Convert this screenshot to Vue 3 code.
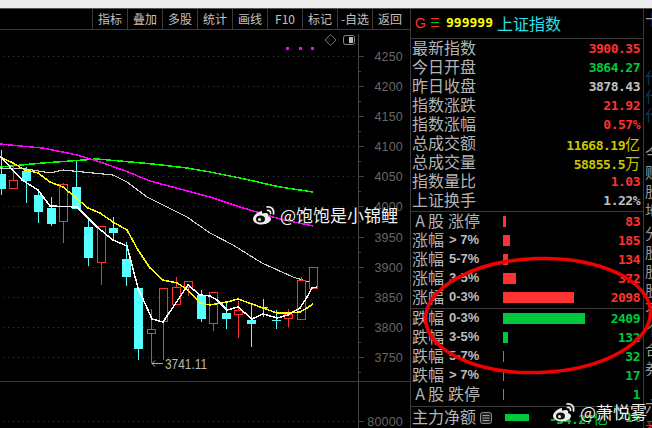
<script setup>
const tools = ['指标', '叠加', '多股', '统计', '画线', 'F10', '标记', '-自选', '返回']

const axis = [
  { y: 56, t: '4250' }, { y: 86, t: '4200' }, { y: 116, t: '4150' }, { y: 146, t: '4100' },
  { y: 176, t: '4050' }, { y: 206, t: '4000' }, { y: 237, t: '3950' }, { y: 267, t: '3900' },
  { y: 297, t: '3850' }, { y: 327, t: '3800' }, { y: 357, t: '3750' }
]

// x, wick top, wick bottom, body top, body bottom, rising
const candles = [
  [1, 150, 195, 174, 189, 0], [13, 163, 189, 180, 188, 1], [26, 167, 203, 171, 181, 0],
  [38, 189, 223, 195, 212, 0], [51, 197, 226, 208, 224, 0], [63, 183, 243, 184, 221, 1],
  [76, 161, 209, 187, 209, 0], [88, 217, 266, 227, 258, 0], [101, 226, 285, 226, 262, 1],
  [113, 217, 240, 228, 233, 0], [126, 242, 286, 259, 277, 0], [138, 288, 360, 288, 349, 0],
  [151, 309, 363, 329, 333, 1], [163, 288, 360, 288, 321, 1], [176, 277, 304, 287, 304, 1],
  [188, 281, 296, 281, 287, 1], [201, 290, 322, 295, 319, 0], [213, 292, 331, 292, 323, 1],
  [226, 302, 329, 313, 319, 0], [238, 301, 338, 310, 314, 1], [251, 303, 347, 320, 324, 0],
  [263, 299, 317, 307, 307.5, 0], [276, 310, 329, 320, 320.5, 0], [288, 309, 327, 314, 318, 1],
  [301, 277, 319, 280, 319, 1], [313, 267, 288, 267, 288, 1]
].map(([x, wt, wb, bt, bb, up]) => ({ x, wt, wb, bt, bb, up }))

const lines = [
  { c: '#00ff00', w: 1.5, p: '0,167 43,163 70,161 97,159 120,161 153,164 187,168 210,172 240,178 280,187 313,192' },
  { c: '#ff00ff', w: 1.5, p: '0,144 20,146 43,148 77,155 97,161 123,170 150,181 180,189 210,197 240,207 280,219 313,226' },
  { c: '#d0d0d0', w: 1.1, p: '0,168 27,169 50,173 63,170 83,172 113,175 127,182 147,197 167,207 187,217 210,233 233,245 262,263 293,277 312,283' },
  { c: '#ffff00', w: 1.5, p: '0,157 13,163 25,170 38,173 50,182 63,187 75,197 88,208 100,213 113,222 127,230 138,250 150,268 163,280 177,283 188,290 200,303 210,305 227,302 238,299 252,304 263,308 277,313 288,313 300,312 307,308 313,304' },
  { c: '#ffffff', w: 1.5, p: '0,156 10,167 22,180 38,190 50,206 77,207 97,227 113,240 127,246 138,288 152,319 163,322 188,285 200,295 210,296 217,300 227,310 238,307 252,319 263,314 277,318 288,315 300,308 307,297 312,288 317,287' }
]

const stats = [
  { l: '最新指数', v: '3900.35', c: 'red' }, { l: '今日开盘', v: '3864.27', c: 'green' },
  { l: '昨日收盘', v: '3878.43', c: 'gray' }, { l: '指数涨跌', v: '21.92', c: 'red' },
  { l: '指数涨幅', v: '0.57%', c: 'red' }, { l: '总成交额', v: '11668.19', u: '亿', c: 'yellow' },
  { l: '总成交量', v: '58855.5', u: '万', c: 'yellow' }, { l: '指数量比', v: '1.03', c: 'red' },
  { l: '上证换手', v: '1.22%', c: 'gray' }
]

const rises = [
  { a: true, l: '涨停', w: 3, v: '83' }, { l: '涨幅', s: '> 7%', w: 7, v: '185' },
  { l: '涨幅', s: '5-7%', w: 5, v: '134' }, { l: '涨幅', s: '3-5%', w: 13, v: '372' },
  { l: '涨幅', s: '0-3%', w: 71, v: '2098' }
]
const falls = [
  { l: '跌幅', s: '0-3%', w: 82, v: '2409' }, { l: '跌幅', s: '3-5%', w: 5, v: '132' },
  { l: '跌幅', s: '5-7%', w: 1, v: '32' }, { l: '跌幅', s: '> 7%', w: 1, v: '17' },
  { a: true, l: '跌停', w: 1, v: '1' }
]

const strip = [
  { t: '十', c: '#999', h: 29 }, { t: '', h: 29 }, { t: '代', c: '#0c3a5c', h: 19 }, { t: '代', c: '#0c3a5c', h: 19 },
  { t: '代', c: '#0c3a5c', h: 19 }, { t: '', h: 19 }, { t: '今', c: '#999', h: 19 }, { t: '财', c: '#999', h: 19 },
  { t: '股', c: '#999', h: 19 }, { t: '地', c: '#999', h: 23 }, { t: '分', c: '#999', h: 19 }, { t: '股', c: '#999', h: 19 },
  { t: '股', c: '#999', h: 19 }, { t: '股', c: '#999', h: 19 }, { t: '不', c: '#999', h: 21 }, { t: '个', c: '#999', h: 19 },
  { t: '合', c: '#999', h: 19 }, { t: '券', c: '#999', h: 19 }, { t: '', h: 19 }, { t: '六', c: '#999', h: 21 },
  { t: '番', c: '#f22', h: 19 }
]
</script>

<template>
  <div class="screen">
    <div class="titlebar"></div>
    <div class="main">
      <div class="left">
        <div class="toolbar">
          <div v-for="t in tools" :key="t" class="tool">{{ t }}</div>
        </div>
        <svg class="chart" width="410" height="398" viewBox="0 30 410 398">
          <g v-for="a in axis" :key="a.t">
            <line x1="3" x2="357" :y1="a.y + 0.5" :y2="a.y + 0.5" class="grid" />
            <line x1="358" x2="364" :y1="a.y + 0.5" :y2="a.y + 0.5" class="tick" />
            <line x1="358" x2="361" :y1="a.y + 15.5" :y2="a.y + 15.5" class="tick" />
            <text x="403" :y="a.y + 5" text-anchor="end" class="axis-label">{{ a.t }}</text>
          </g>
          <line x1="3" x2="357" y1="421.5" y2="421.5" class="grid" />
          <line x1="358" x2="364" y1="421.5" y2="421.5" class="tick" />
          <text x="403" y="426" text-anchor="end" class="axis-label">80000</text>
          <line x1="358.5" x2="358.5" y1="34" y2="428" class="tick" />
          <line x1="0" x2="410" y1="381.5" y2="381.5" stroke="#3a3a3a" />

          <path d="M330.5 34.500l5.500 5.500-5.500 5.500-5.500-5.500z" fill="none" stroke="#777" />
          <rect x="343.5" y="35.5" width="11" height="9" rx="2" fill="#000" stroke="#888" />
          <rect x="349" y="37" width="4" height="6" fill="#bbb" />
          <rect x="286" y="47" width="3" height="3" fill="#ff00ff" />
          <rect x="299" y="47" width="3" height="3" fill="#ff00ff" />
          <rect x="311" y="47" width="3" height="3" fill="#ff00ff" />

          <polyline v-for="l in lines.slice(0, 3)" :key="l.c" :points="l.p" class="ma" :stroke="l.c" :stroke-width="l.w" />
          <g v-for="k in candles" :key="k.x">
            <line :x1="k.x + 0.5" :x2="k.x + 0.5" :y1="k.wt" :y2="k.wb" :stroke="k.up ? '#ff3232' : '#55ffff'" />
            <rect v-if="k.up" :x="k.x - 3.5" :y="k.bt + 0.5" width="8" :height="k.bb - k.bt" fill="#000" stroke="#ff3232" />
            <rect v-else :x="k.x - 4" :y="k.bt" width="9" :height="Math.max(k.bb - k.bt, 1)" fill="#55ffff" />
          </g>
          <polyline v-for="l in lines.slice(3)" :key="l.c" :points="l.p" class="ma" :stroke="l.c" :stroke-width="l.w" />

          <path d="M152 363.500h11M152 363.500l3-3M152 363.500l3 3" fill="none" stroke="#aaa" />
          <text x="165" y="369" textLength="42" lengthAdjust="spacingAndGlyphs" class="low-label">3741.11</text>
        </svg>
      </div>

      <div class="panel">
        <div class="head">
          <span class="g">G</span>
          <svg class="menu" width="8" height="9" viewBox="0 0 8 9">
            <rect y="0" width="8" height="1" fill="#ff3232" />
            <rect y="4" width="8" height="1" fill="#00d040" />
            <rect y="8" width="8" height="1" fill="#ff3232" />
          </svg>
          <span class="code">999999</span>
          <span class="name">上证指数</span>
        </div>

        <div class="section stats">
          <div v-for="s in stats" :key="s.l" class="row">
            <span class="label">{{ s.l }}</span>
            <span class="value" :class="s.c">{{ s.v }}<span v-if="s.u" class="unit">{{ s.u }}</span></span>
          </div>
        </div>

        <div class="section rise">
          <div v-for="r in rises" :key="r.s || r.l" class="row">
            <span class="label wide">
              <template v-if="r.a"><span class="a">A</span>股 <span class="tight">{{ r.l }}</span></template>
              <template v-else>{{ r.l }}<span class="range">{{ r.s }}</span></template>
            </span>
            <span class="bar bar-red" :style="{ width: r.w + 'px' }"></span>
            <span class="value red">{{ r.v }}</span>
          </div>
        </div>

        <div class="section fall">
          <div v-for="r in falls" :key="r.s || r.l" class="row">
            <span class="label wide">
              <template v-if="r.a"><span class="a">A</span>股 <span class="tight">{{ r.l }}</span></template>
              <template v-else>{{ r.l }}<span class="range">{{ r.s }}</span></template>
            </span>
            <span class="bar bar-green" :style="{ width: r.w + 'px' }"></span>
            <span class="value green">{{ r.v }}</span>
          </div>
        </div>

        <div class="section flow">
          <span class="label">主力净额</span>
          <svg class="doc" width="12" height="12" viewBox="0 0 12 12">
            <rect x="0.5" y="0.5" width="11" height="11" rx="2" fill="#222" stroke="#888" />
            <path d="M2.500 3.500h7M2.500 6h7M2.500 8.500h7" stroke="#999" />
          </svg>
          <span class="flow-bar"></span>
          <span class="flow-val">-34.27<span class="unit">亿</span></span>
          <span class="flow-pct">-1%</span>
        </div>
      </div>

      <div class="strip">
        <div v-for="(s, i) in strip" :key="i" class="strip-cell" :style="{ height: s.h + 'px', color: s.c }">{{ s.t }}</div>
      </div>
    </div>

    <svg class="ring" width="652" height="428" viewBox="0 0 652 428">
      <ellipse cx="538" cy="315.5" rx="112.5" ry="57" transform="rotate(-2 538 315.5)" fill="none" stroke="#f00000" stroke-width="3.5" />
    </svg>

    <div class="mark mark-top">
      <svg width="24" height="20" viewBox="0 0 24 20">
        <path d="M9.500 6C5 7 1 11 1 14c0 3.500 4.500 5.500 8.500 5.500 5.500 0 9.500-3 9.500-5.500 0-2-2-2.500-3-3 .8-2-.3-3.500-3-3-1.500.3-3 1-3 .5.300-1.800-.2-2.800-.5-2.500z" fill="#eee" />
        <ellipse cx="8.500" cy="14" rx="4.500" ry="3.500" fill="#111" />
        <circle cx="7.500" cy="14.500" r="1.500" fill="#eee" />
        <path d="M15 2c4-1 7.500 2.500 6.500 7M15.500 5.500c2-.5 3.500 1 3 3" fill="none" stroke="#eee" stroke-width="1.700" stroke-linecap="round" />
      </svg>
      <span>@饱饱是小锦鲤</span>
    </div>
    <div class="mark mark-bottom">
      <svg width="24" height="20" viewBox="0 0 24 20">
        <path d="M9.500 6C5 7 1 11 1 14c0 3.500 4.500 5.500 8.500 5.500 5.500 0 9.500-3 9.500-5.500 0-2-2-2.500-3-3 .8-2-.3-3.500-3-3-1.500.3-3 1-3 .5.300-1.800-.2-2.800-.5-2.500z" fill="#eee" />
        <ellipse cx="8.500" cy="14" rx="4.500" ry="3.500" fill="#111" />
        <circle cx="7.500" cy="14.500" r="1.500" fill="#eee" />
        <path d="M15 2c4-1 7.500 2.500 6.500 7M15.500 5.500c2-.5 3.500 1 3 3" fill="none" stroke="#eee" stroke-width="1.700" stroke-linecap="round" />
      </svg>
      <span>@萧悦雾</span>
    </div>
  </div>
</template>

<style>
html, body { margin: 0; background: #000; }
</style>

<style scoped>
.screen {
  position: relative;
  width: 652px;
  height: 428px;
  overflow: hidden;
  background: #000;
  display: flex;
  flex-direction: column;
  font-family: "Noto Sans CJK SC", "Liberation Sans", sans-serif;
  color: #c0c0c0;
}
.titlebar {
  height: 8px;
  flex: none;
  background: #ececec;
  border-bottom: 1px solid #555;
}
.main {
  flex: 1;
  display: flex;
  min-height: 0;
}
.left {
  width: 410px;
  flex: none;
  display: flex;
  flex-direction: column;
}
.toolbar {
  height: 20px;
  flex: none;
  display: flex;
  justify-content: flex-end;
  padding-right: 3px;
  border-bottom: 1px solid #3a3a3a;
}
.tool {
  width: 34px;
  border-left: 1px solid #3a3a3a;
  font-size: 12px;
  line-height: 20px;
  text-align: center;
  white-space: nowrap;
  color: #c0c0c0;
}
.chart { display: block; flex: none; }
.grid { stroke: #3c3c3c; stroke-dasharray: 1 4; }
.tick { stroke: #444; }
.ma { fill: none; shape-rendering: crispEdges; }
.axis-label {
  fill: #666;
  font: 12.5px "Liberation Sans", sans-serif;
  letter-spacing: 0.2px;
}
.low-label { fill: #b8b8b8; font: 14px "Liberation Sans", sans-serif; }

.panel {
  width: 234px;
  flex: none;
  box-sizing: border-box;
  border-left: 1px solid #3a3a3a;
  border-right: 1px solid #3a3a3a;
  display: flex;
  flex-direction: column;
}
.head {
  height: 27px;
  flex: none;
  display: flex;
  align-items: center;
  border-bottom: 1px solid #3a3a3a;
  padding: 0 0 2px 4px;
}
.g { color: #ff3232; font: 14px "Liberation Sans", sans-serif; width: 16px; }
.menu { margin-right: 7px; }
.code { color: #ffff00; font: bold 13px "DejaVu Sans Mono", monospace; width: 51px; }
.name { color: #28e0f0; font-size: 16px; line-height: 20px; }

.section { flex: none; }
.stats { padding-bottom: 1px; border-bottom: 1px solid #3a3a3a; }
.rise { padding-bottom: 1px; border-bottom: 1px solid #3a3a3a; }
.fall { padding-bottom: 2px; border-bottom: 1px solid #3a3a3a; }
.row {
  height: 19px;
  display: flex;
  align-items: center;
  padding: 0 3px 0 1px;
}
.label {
  font-size: 16px;
  line-height: 19px;
  margin-top: -2px;
  white-space: nowrap;
  color: #b4b4b4;
}
.wide { width: 91px; flex: none; display: flex; align-items: center; }
.a { display: inline-block; width: 16px; text-align: center; }
.tight { margin-left: 4px; }
.range {
  font: bold 13px "Liberation Sans", sans-serif;
  margin-left: 5px;
  color: #bcbcbc;
}
.bar { height: 11px; flex: none; }
.bar-red { background: #ff3232; }
.bar-green { background: #00c83c; }
.value {
  margin-left: auto;
  font: bold 13px "DejaVu Sans Mono", monospace;
  letter-spacing: -0.5px;
  white-space: nowrap;
}
.unit { font-family: "Noto Sans CJK SC", sans-serif; font-weight: 400; font-size: 15px; letter-spacing: 0; }
.red { color: #ff3232; }
.green { color: #00c83c; }
.gray { color: #c0c0c0; }
.yellow { color: #c8c800; }

.flow {
  flex: 1;
  display: flex;
  align-items: center;
  padding-left: 1px;
  min-height: 0;
}
.doc { margin-left: 4px; flex: none; }
.flow-bar {
  width: 24px;
  height: 7px;
  margin-left: 13px;
  background: #00c83c;
  flex: none;
}
.flow-val {
  margin-left: 20px;
  font: bold 13px "DejaVu Sans Mono", monospace;
  letter-spacing: -0.5px;
  color: #00c83c;
  white-space: nowrap;
}
.flow-pct {
  margin-left: auto;
  margin-right: 3px;
  font: bold 13px "DejaVu Sans Mono", monospace;
  letter-spacing: -0.5px;
  color: #00c83c;
}

.strip {
  flex: 1;
  min-width: 0;
  overflow: hidden;
  padding-left: 1px;
}
.strip-cell {
  font-size: 15px;
  line-height: 19px;
  white-space: nowrap;
}

.ring {
  position: absolute;
  left: 0;
  top: 0;
  pointer-events: none;
}
.mark {
  position: absolute;
  display: flex;
  align-items: center;
  gap: 4px;
  color: #f2f2f2;
  font-size: 17px;
  line-height: 20px;
  white-space: nowrap;
  text-shadow: 0 0 1px #000;
}
.mark-top { left: 252px; top: 205px; }
.mark-bottom { left: 552px; top: 402px; }
</style>
